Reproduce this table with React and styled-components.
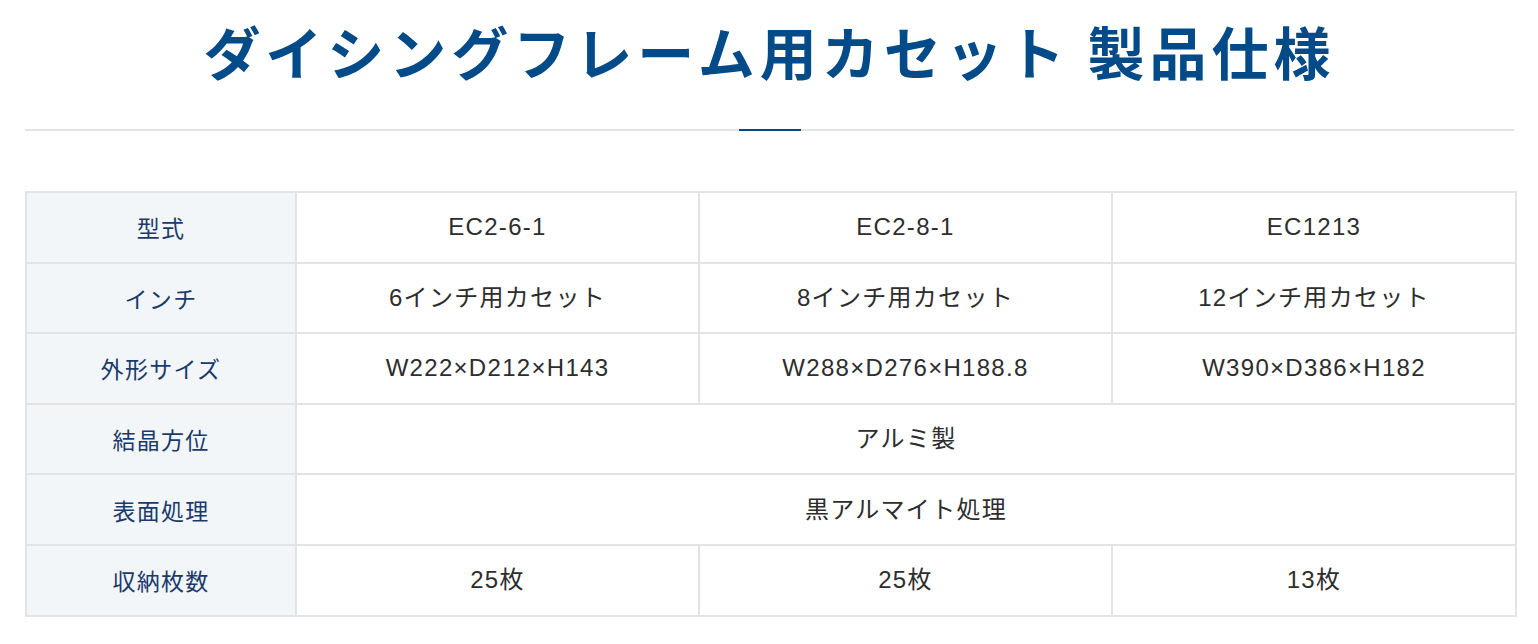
import styled, { createGlobalStyle } from "styled-components";

const GlobalStyle = createGlobalStyle`
  body {
    margin: 0;
    background: #fff;
    font-family: "Liberation Sans", "Noto Sans CJK JP", sans-serif;
  }
`;

const colWidths = [270, 403, 413, 404];

const specs = [
  { label: "型式", values: ["EC2-6-1", "EC2-8-1", "EC1213"] },
  { label: "インチ", values: ["6インチ用カセット", "8インチ用カセット", "12インチ用カセット"] },
  { label: "外形サイズ", values: ["W222×D212×H143", "W288×D276×H188.8", "W390×D386×H182"] },
  { label: "結晶方位", values: ["アルミ製"] },
  { label: "表面処理", values: ["黒アルマイト処理"] },
  { label: "収納枚数", values: ["25枚", "25枚", "13枚"] },
];

export default function App() {
  return (
    <>
      <GlobalStyle />
      <Page>
        <Title>ダイシングフレーム用カセット 製品仕様</Title>
        <Divider />
        <SpecTable>
          <colgroup>
            {colWidths.map((w, i) => (
              <Col key={i} $w={w} />
            ))}
          </colgroup>
          <tbody>
            {specs.map((row) => (
              <tr key={row.label}>
                <LabelCell>{row.label}</LabelCell>
                {row.values.length === 1 ? (
                  <ValueCell colSpan={3}>{row.values[0]}</ValueCell>
                ) : (
                  row.values.map((val, i) => <ValueCell key={i}>{val}</ValueCell>)
                )}
              </tr>
            ))}
          </tbody>
        </SpecTable>
      </Page>
    </>
  );
}

const Page = styled.div`
  padding: 10px 24px 0 25px;
`;

const Title = styled.h2`
  margin: 0;
  text-align: center;
  font-family: "Noto Sans CJK JP", sans-serif;
  font-weight: 700;
  font-size: 57px;
  line-height: 80px;
  letter-spacing: 5px;
  color: #034a89;
`;

const Divider = styled.div`
  position: relative;
  height: 2px;
  margin-top: 39px;
  background: #e4e4e4;

  &::after {
    content: "";
    position: absolute;
    left: 50%;
    top: 0;
    width: 62px;
    height: 2px;
    margin-left: -31px;
    background: #034a89;
  }
`;

const Col = styled.col`
  width: ${({ $w }) => $w}px;
`;

const SpecTable = styled.table`
  width: 1490px;
  margin-top: 60px;
  border-collapse: collapse;
  table-layout: fixed;
  border: 2px solid #e3e3e3;
`;

const Cell = styled.td`
  height: 68.6px;
  padding: 0 10px;
  border: 2px solid #e3e3e3;
  text-align: center;
  vertical-align: middle;
  font-size: 24px;
  line-height: 30px;
  letter-spacing: 1.3px;
`;

const LabelCell = styled(Cell)`
  background: #f3f6f9;
  color: #1b3a6c;
  font-family: "Noto Sans CJK JP", sans-serif;
  font-size: 23px;
`;

const ValueCell = styled(Cell)`
  color: #2d2d2d;
  background: #fff;
`;
